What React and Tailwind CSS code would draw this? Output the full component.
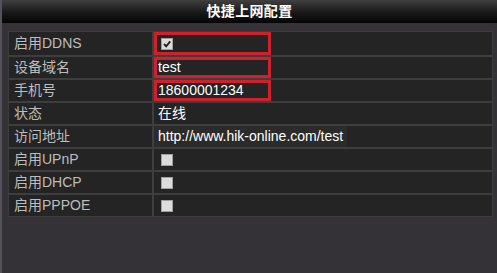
const rows = [
  { label: "启用DDNS", type: "check", checked: true, boxed: true },
  { label: "设备域名", type: "text", value: "test", boxed: true },
  { label: "手机号", type: "text", value: "18600001234", boxed: true },
  { label: "状态", type: "text", value: "在线" },
  { label: "访问地址", type: "text", value: "http://www.hik-online.com/test", shade: true },
  { label: "启用UPnP", type: "check" },
  { label: "启用DHCP", type: "check" },
  { label: "启用PPPOE", type: "check" },
];

const Check = ({ checked }) => (
  <span className="w-[12px] h-[12px] bg-[#dcdcdc] border border-[#a0a0a0] flex items-center justify-center">
    {checked && (
      <svg width="10" height="10" viewBox="0 0 10 10">
        <path d="M2 5 L4.2 7.4 L8.2 2.4" stroke="#222" strokeWidth="1.9" fill="none" />
      </svg>
    )}
  </span>
);

export default function App() {
  return (
    <div
      className="w-[497px] h-[273px] bg-[#353237] flex flex-col overflow-hidden border-l-2 border-[#55525a]"
      style={{ fontFamily: '"Liberation Sans", "Noto Sans CJK SC", sans-serif' }}
    >
      {/* Title */}
      <div className="h-[23px] shrink-0 bg-gradient-to-b from-[#404040] via-[#1c1c1c] to-[#050505] flex items-center justify-center text-white text-[14px] font-bold tracking-wide">
        快捷上网配置
      </div>

      <div className="pt-[8px] pl-[6px] pr-[4px]">
        <div className="bg-[#242424] border border-[#3c3c3c]">
          {rows.map((row, i) => (
            <div
              key={i}
              className={`flex h-[23px] ${i > 0 ? "border-t-2 border-[#3e3e3e]" : ""}`}
            >
              <div className="w-[145px] shrink-0 border-r-2 border-[#3e3e3e] flex items-center pl-[5px] text-[#bdbdbd] text-[14px]">
                {row.label}
              </div>
              <div className="flex-1 flex items-center">
                <div
                  className={`h-full flex items-center ${
                    row.boxed ? "w-[117px] border-[3px] border-[#d0202c] pl-[1px]" : "pl-[4px]"
                  } ${row.shade ? "bg-[#2b2b2b] pr-[4px]" : ""}`}
                >
                  {row.type === "check" ? (
                    <span className="ml-[3px]"><Check checked={row.checked} /></span>
                  ) : (
                    <span className="text-white text-[14px]">{row.value}</span>
                  )}
                </div>
              </div>
            </div>
          ))}
        </div>
      </div>
    </div>
  );
}
